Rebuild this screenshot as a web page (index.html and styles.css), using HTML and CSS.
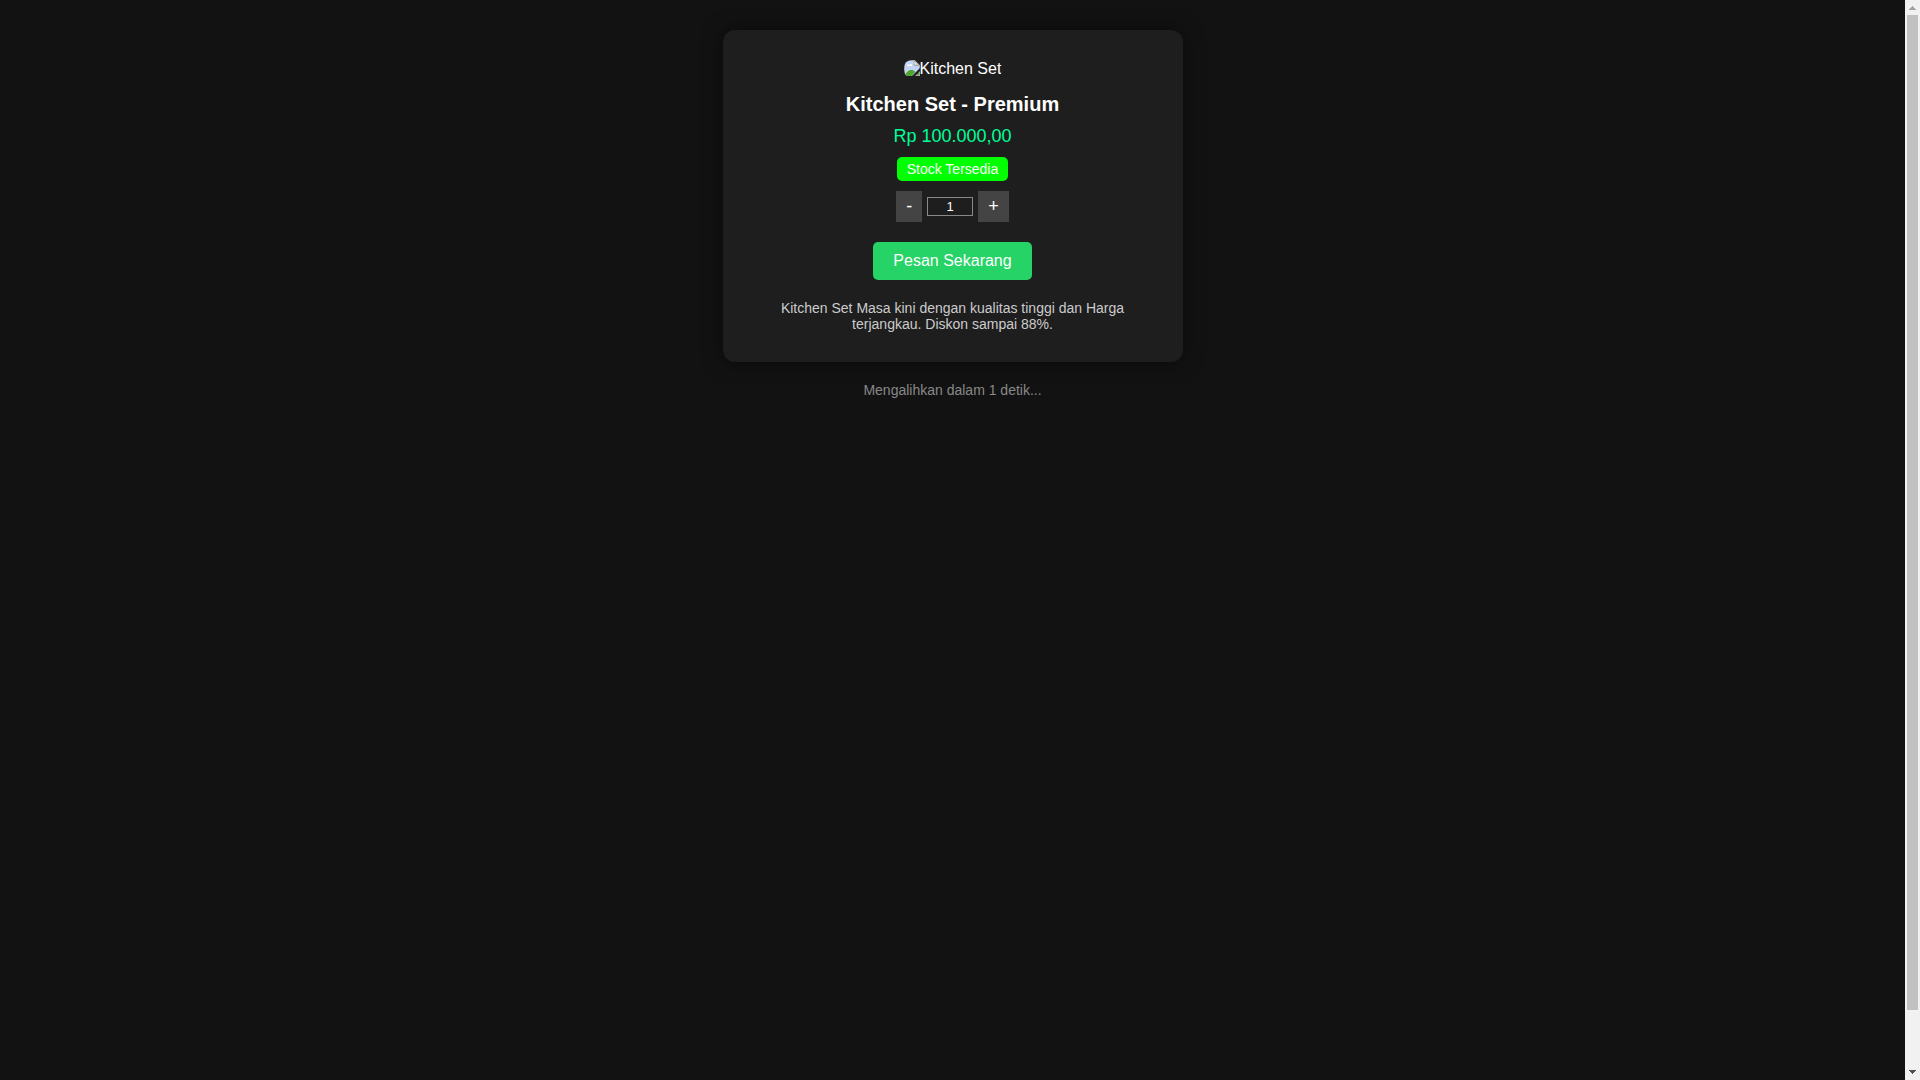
FILE: index.html
```
<!DOCTYPE html>
<html lang="id">
<head>
    <meta charset="UTF-8">
    <title>Kitchen Set - Premium</title>
    <meta name="viewport" content="width=device-width, initial-scale=1.0">
    <link rel="stylesheet" href="styles.css">
</head>
<body>

<main class="page">
    <div class="product-card">
        <div class="product-image">
            <svg width="16" height="16" viewBox="0 0 16 16" aria-hidden="true">
                <path d="M0 0h11l5 5v11H0z" fill="#a9a9a9"/>
                <path d="M1 1h9v5h5v9H1z" fill="#c3d5f5"/>
                <path d="M3 6c0-2 2-2 2.500-1 1-2 3-1 2.500 1z" fill="#fff"/>
                <path d="M1 15c1-3 4-5 6-5s3 1 4 2l-3 3z" fill="#4ea72d"/>
                <path d="M2 15c1-3 3-5 5-5s4 1 4 2l-4 4H2z" fill="#4ea72d"/>
                <path d="M11 15l4-4v4z" fill="#4ea72d"/>
                <path d="M8 16l8-8v3l-5 5z" fill="#1e1e1e"/>
                <path d="M10 1v4h5z" fill="#f4f4f4" stroke="#a9a9a9"/>
                <path d="M11 0h5v5z" fill="#1e1e1e"/>
            </svg>
            <span>Kitchen Set</span>
        </div>
        <h1>Kitchen Set - Premium</h1>
        <div class="price">Rp 100.000,00</div>
        <div class="stock">Stock Tersedia</div>

        <div class="quantity">
            <button type="button" id="minus">-</button>
            <input type="text" id="qty" value="1" inputmode="numeric" aria-label="Jumlah">
            <button type="button" id="plus">+</button>
        </div>

        <button type="button" class="order-btn">Pesan Sekarang</button>

        <p class="description">Kitchen Set Masa kini dengan kualitas tinggi dan Harga terjangkau. Diskon sampai 88%.</p>
    </div>

    <p class="redirect">Mengalihkan dalam 1 detik...</p>
</main>

<div class="scrollbar" aria-hidden="true">
    <svg class="arrow" width="15" height="15" viewBox="0 0 15 15" shape-rendering="crispEdges">
        <path d="M7 6h1v1h1v1h1v1h1v1H4V9h1V8h1V7h1z" fill="#a3a3a3"/>
    </svg>
    <div class="track">
        <div class="thumb"></div>
    </div>
    <svg class="arrow" width="15" height="15" viewBox="0 0 15 15" shape-rendering="crispEdges">
        <path d="M4 5h7v1h-1v1H9v1H8v1H7V8H6V7H5V6H4z" fill="#505050"/>
    </svg>
</div>

<script>
    const qty = document.getElementById("qty");

    function changeQty(step) {
        const current = parseInt(qty.value) || 1;
        qty.value = Math.max(1, current + step);
    }

    document.getElementById("minus").addEventListener("click", () => changeQty(-1));
    document.getElementById("plus").addEventListener("click", () => changeQty(1));
</script>

</body>
</html>
```
FILE: styles.css
```
body {
    font-family: Arial, "Liberation Sans", sans-serif;
    margin: 0;
    min-height: 100vh;
    background: #121212;
    color: #fff;
    display: flex;
}

.page {
    flex: 1;
    padding: 30px 20px;
    display: flex;
    flex-direction: column;
    align-items: center;
}

.product-card {
    background: #1e1e1e;
    padding: 30px;
    border-radius: 12px;
    box-shadow: 0 0 20px rgba(0, 0, 0, 0.5);
    width: 100%;
    max-width: 400px;
    display: flex;
    flex-direction: column;
    align-items: center;
    text-align: center;
}

.product-image {
    display: flex;
    align-items: flex-start;
    width: 98px;
    height: 18px;
    font-size: 16px;
    line-height: 18px;
    white-space: nowrap;
    overflow: hidden;
    border-radius: 8px;
}

.product-image svg {
    flex: none;
}

h1 {
    font-size: 20px;
    line-height: 23px;
    margin: 15px 0 10px;
}

.price {
    font-size: 18px;
    line-height: 21px;
    color: #00ff99;
}

.stock {
    background: #00ff00;
    font-size: 14px;
    line-height: 16px;
    padding: 4px 10px;
    border-radius: 5px;
    margin: 10px 0;
}

.quantity {
    display: flex;
    align-items: center;
    gap: 5px;
}

.quantity button {
    background: #444;
    color: #fff;
    border: none;
    font-family: inherit;
    font-size: 18px;
    line-height: 21px;
    padding: 5px 10px;
    cursor: pointer;
}

.quantity input {
    box-sizing: border-box;
    width: 46px;
    height: 19px;
    padding: 1px 2px;
    background: #1e1e1e;
    color: #fff;
    border: 1px solid #888;
    font-family: inherit;
    font-size: 13px;
    text-align: center;
}

.order-btn {
    background: #25d366;
    color: #fff;
    border: none;
    border-radius: 5px;
    font-family: inherit;
    font-size: 16px;
    line-height: 18px;
    padding: 10px 20px;
    margin: 20px 0;
    cursor: pointer;
}

.description {
    font-size: 14px;
    line-height: 16px;
    color: #ccc;
    margin: 0;
}

.redirect {
    font-size: 14px;
    line-height: 16px;
    color: #888;
    margin: 20px 0 0;
}

.scrollbar {
    position: sticky;
    top: 0;
    width: 15px;
    height: 100vh;
    background: #f1f1f1;
    display: flex;
    flex-direction: column;
}

.arrow {
    flex: none;
}

.track {
    flex: 1;
    padding: 0 2px;
}

.thumb {
    height: calc(100% * 18 / 19);
    background: #c1c1c1;
}
```
